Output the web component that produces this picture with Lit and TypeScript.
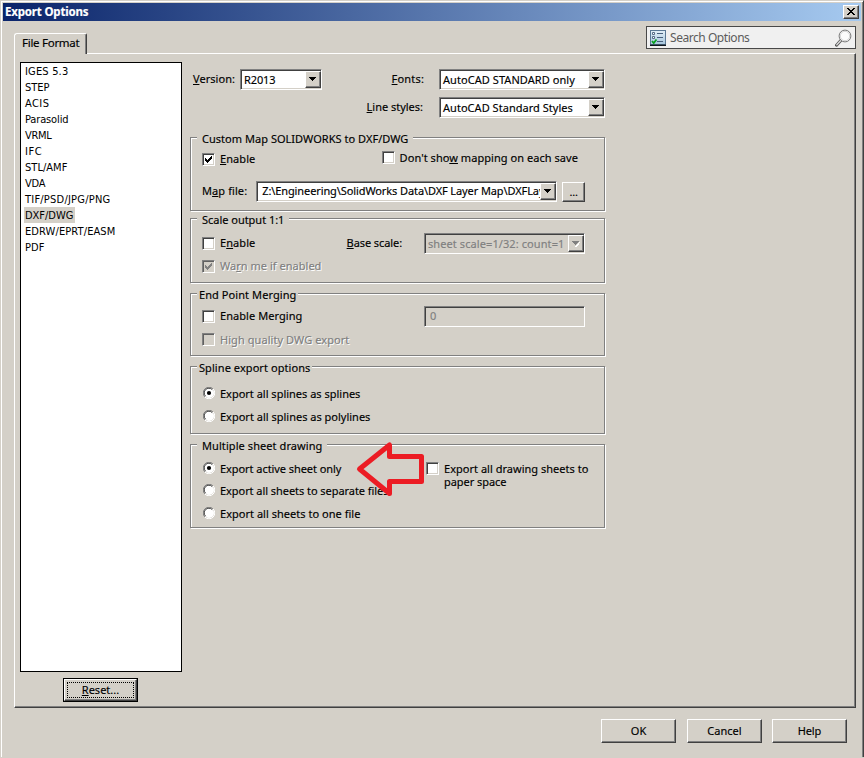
import { LitElement, html, css, svg, nothing } from "lit";
import { customElement } from "lit/decorators.js";

const FORMATS: [string, number][] = [
  ["IGES 5.3", 43], ["STEP", 24], ["ACIS", 24], ["Parasolid", 43], ["VRML", 26], ["IFC", 17],
  ["STL/AMF", 42], ["VDA", 20], ["TIF/PSD/JPG/PNG", 85], ["DXF/DWG", 48], ["EDRW/EPRT/EASM", 90], ["PDF", 19],
];

/** A caption; "&" marks the access key, data-w is the width it should take. */
const t = (text: string, w: number, cls = "") => {
  const i = text.indexOf("&");
  const body = i < 0 ? html`${text}` : html`${text.slice(0, i)}<u>${text[i + 1]}</u>${text.slice(i + 2)}`;
  return html`<span class="t ${cls}" data-w=${w}>${body}</span>`;
};

const check = (on = false, off = false) => html`<span class="check ${off ? "off" : ""}">${on
  ? html`<svg width="9" height="9" viewBox="0 0 9 9" shape-rendering="crispEdges"><path d="M1 3h1v1h1v1h1v-1h1v-1h1v-1h1v-1h1v3h-1v1h-1v1h-1v1h-1v1h-1v-1h-1v-1h-1z" fill=${off ? "#808080" : "#000"}/></svg>`
  : nothing}</span>`;

const radio = (on = false) => html`<svg class="radio" width="12" height="12" viewBox="0 0 12 12">
  <circle cx="6" cy="6" r="5" fill="#fff"/>
  <path d="M1.9 10.1A5.5 5.5 0 0 1 10.1 1.9" fill="none" stroke="#808080"/>
  <path d="M2.6 9.2A4.5 4.5 0 0 1 9.2 2.6" fill="none" stroke="#404040"/>
  <path d="M10.1 1.9A5.5 5.5 0 0 1 1.9 10.1" fill="none" stroke="#fff"/>
  ${on ? svg`<circle cx="6" cy="6" r="2.1" fill="#000"/>` : nothing}
</svg>`;

const combo = (text: string, w: number, cls: string, off = false) => html`<span class="combo ${cls} ${off ? "off" : ""}">
  <span class="val">${t(text, w)}</span>
  <span class="drop"><svg width="8" height="5" viewBox="0 0 8 5" shape-rendering="crispEdges">
    ${off ? svg`<path d="M8 1L5 5h-1l4-4z" fill="#fff" stroke="#fff"/>` : nothing}
    <path d="M0 0h7v1h-1v1h-1v1h-1v1h-1v-1h-1v-1h-1v-1h-1z" fill=${off ? "#808080" : "#000"}/></svg></span>
</span>`;

@customElement("app-root")
export class AppRoot extends LitElement {
  static styles = css`
    :host { display: block; width: 864px; height: 758px; overflow: hidden; background: #d4d0c8;
      font: 11px/16px "Noto Sans", "Open Sans", sans-serif; color: #000; }
    * { box-sizing: border-box; }
    .t { white-space: pre; display: block; flex: none; -webkit-text-stroke: 0.15px currentColor; }
    u { text-decoration: underline; text-underline-offset: 1px; text-decoration-thickness: 1px; text-decoration-skip-ink: none; }
    .win { position: relative; height: 757px; border-left: 1px solid #d4d0c8; border-top: 1px solid #d4d0c8;
      border-right: 1px solid #404040; box-shadow: inset 1px 1px #fff, inset -1px 0 #808080; padding: 2px 2px 0; }
    .title { height: 18px; display: flex; justify-content: space-between; align-items: center; color: #fff;
      background: linear-gradient(90deg, #0a246a, #a6caf0); padding: 0 2px 0 2px; font-weight: 700; font-size: 11.5px; }
    .bev { background: #d4d0c8; border: 1px solid; border-color: #fff #404040 #404040 #fff; box-shadow: inset -1px -1px #808080; }
    .close { width: 16px; height: 14px; display: grid; place-items: center; padding: 0 1px 1px 0; }
    .head { display: flex; justify-content: space-between; height: 32px; padding: 5px 5px 0 11px; }
    .tab { position: relative; z-index: 1; margin-top: 7px; width: 73px; height: 21px; border-left: 1px solid #fff; border-top: 1px solid #fff;
      border-right: 1px solid #404040; box-shadow: inset -1px 0 #808080; border-radius: 3px 2px 0 0; background: #d4d0c8; padding: 1px 0 0 7px; }
    .tab .t { font-size: 11.5px; }
    .search .t { font-size: 12px; }
    .search { width: 210px; height: 23px; border: 1px solid #484848; background: #f0f0f0; display: flex; align-items: center;
      padding: 0 3px; color: #5c5c5c; }
    .search .t { margin-left: 4px; flex: 1; -webkit-text-stroke: 0; }
    .page { margin-left: 11px; width: 842px; height: 655px; border: 1px solid; border-color: #fff #404040 #404040 #fff;
      box-shadow: inset -1px -1px #808080; display: flex; padding: 8px 0 0 5px; }
    .left { width: 162px; display: flex; flex-direction: column; }
    .list { height: 610px; border: 1px solid #000; background: #fff; padding: 0 3px; font-family: "DejaVu Sans Condensed", "DejaVu Sans", sans-serif; font-stretch: condensed; }
    .item { height: 16px; width: fit-content; padding: 1px 1px 0; }
    .item.sel { background: #d4d0c8; padding-right: 2px; }
    .item .t { -webkit-text-stroke: 0; }
    .reset { margin: 6px 0 0 43px; width: 75px; height: 24px; border: 1px solid #000; }
    .reset .bev { height: 22px; padding: 2px; }
    .focus { height: 16px; border: 1px dotted #000; display: flex; justify-content: center; align-items: center; }
    .main { margin-left: 8px; width: 415px; }
    .opt { display: flex; align-items: center; height: 21px; }
    .opt > .t, .tall > .t { margin-top: -2px; }
    .opt1 { margin-top: 7px; padding-left: 3px; }
    .opt2 { margin: 7px 0 19px; }
    .rt { margin-left: auto; }
    .combo { display: flex; flex: none; height: 21px; background: #fff; border: 1px solid; border-color: #808080 #fff #fff #808080;
      box-shadow: inset 1px 1px #404040, inset -1px -1px #d4d0c8; padding: 1px 0 1px 2px; align-items: stretch; }
    .combo .val { flex: 1; min-width: 0; overflow: hidden; padding: 1px 0 0 1px; }
    .drop { flex: none; width: 16px; display: grid; place-items: center; background: #d4d0c8; border: 1px solid;
      border-color: #fff #404040 #404040 #fff; box-shadow: inset -1px -1px #808080; }
    .drop svg { overflow: visible; }
    .off { color: #808080; }
    .combo.off, .check.off { background: #d4d0c8; }
    .c-version { width: 82px; margin-left: 5px; }
    .c-wide { width: 166px; }
    .c-map { width: 301px; margin-left: 9px; }
    .c-map .val { padding: 0 0 0 3px; }
    .c-scale { width: 161px; }
    .field { width: 161px; height: 21px; border: 1px solid; border-color: #808080 #fff #fff #808080;
      box-shadow: inset 1px 1px #404040; color: #808080; padding: 1px 0 0 5px; }
    .group { border: 1px solid #808080; box-shadow: inset 1px 1px #fff, 1px 1px #fff; width: 415px; }
    .g1 { height: 74px; margin-bottom: 7px; }
    .g2 { height: 65px; margin-bottom: 10px; }
    .g3 { height: 63px; margin-bottom: 10px; }
    .g4 { height: 68px; margin-bottom: 10px; }
    .g5 { height: 84px; }
    .legend { width: fit-content; height: 16px; margin: -7px 0 0 6px; padding: 0 5px 0 5px; background: #d4d0c8; }
    .legend.tight { padding: 0 2px 0 2px; }
    .row { display: flex; align-items: center; height: 16px; padding: 0 19px 0 11px; }
    .tall { height: 21px; }
    .m3 { margin-top: 3px; } .m4 { margin-top: 4px; } .m5 { margin-top: 5px; } .m6 { margin-top: 6px; }
    .m7 { margin-top: 7px; } .m10 { margin-top: 10px; } .m14 { margin-top: 14px; }
    .check { flex: none; width: 13px; height: 13px; margin-right: 5px; background: #fff; border: 1px solid;
      border-color: #808080 #fff #fff #808080; box-shadow: inset 1px 1px #404040, inset -1px -1px #d4d0c8; display: grid; place-items: center; }
    .check.off { box-shadow: inset 1px 1px #606060; }
    .raise .check { margin-bottom: 1px; }
    .etch { color: #808080; text-shadow: 1px 1px #fff; }
    .radio { flex: none; margin: 0 5px 2px 1px; }
    .show { display: flex; align-items: center; margin: -3px 7px 0 auto; }
    .dots { width: 23px; height: 20px; margin-left: 5px; display: grid; place-items: center; }
    .cols { display: flex; }
    .colL { width: 235px; }
    .colL .row { padding-right: 0; }
    .sheet { display: flex; margin-top: 8px; line-height: 13px; }
    .arrow { position: absolute; left: 354px; top: 438px; }
    .foot { display: flex; justify-content: flex-end; margin-top: 11px; padding-right: 14px; }
    .btn { width: 75px; height: 24px; display: grid; place-items: center; }
    .btn + .btn { margin-left: 11px; }
    .btn.help { margin-left: 10px; }
  `;

  /** Track each caption so that it fills the width it was given. */
  updated() {
    this.renderRoot.querySelectorAll<HTMLElement>(".t").forEach((el) => {
      const n = el.textContent!.length;
      const range = document.createRange();
      range.selectNodeContents(el);
      const spacing = (Number(el.dataset.w) + 0.4 - range.getBoundingClientRect().width) / n;
      el.style.letterSpacing = `${spacing.toFixed(3)}px`;
    });
  }

  render() {
    return html`<div class="win">
      <div class="title">${t("Export Options", 83)}
        <span class="bev close"><svg width="8" height="7" viewBox="0 0 8 7" shape-rendering="crispEdges"><path d="M0 0h2v1h1v1h2v-1h1v-1h2v1h-1v1h-1v1h-1v1h1v1h1v1h1v1h-2v-1h-1v-1h-2v1h-1v1h-2v-1h1v-1h1v-1h1v-1h-1v-1h-1v-1h-1z"/></svg></span>
      </div>
      <div class="head">
        <div class="tab">${t("File Format", 57)}</div>
        <div class="search">
          <svg width="16" height="16" viewBox="0 0 16 16">
            <defs><linearGradient id="sheet" x2="0" y2="1"><stop stop-color="#e4f0f8"/><stop offset="1" stop-color="#a4c4dc"/></linearGradient></defs>
            <rect x=".5" y=".5" width="15" height="14" fill="url(#sheet)" stroke="#5a7894"/>
            <path d="M0 15.3h16" stroke="#101820" stroke-width="1.4"/>
            <path d="M7 3.5h6M7 7.5h6M7 11.5h6" stroke="#48607c"/>
            <path d="M2.5 2.5h2v2h-2zM2.5 6.5h2v2h-2z" fill="#fff" stroke="#48607c" stroke-width=".9"/>
            <path d="M2 11l1.7 2L6.500 9.500" fill="none" stroke="#08a020" stroke-width="1.8"/>
          </svg>
          ${t("Search Options", 79)}
          <svg width="17" height="18" viewBox="0 0 17 18">
            <path d="M1.500 16.200L6.200 11" stroke="#555" stroke-width="3" stroke-linecap="round"/>
            <path d="M1.800 15.800L6.200 11" stroke="#ddd" stroke-width="1.300" stroke-linecap="round"/>
            <circle cx="10" cy="7" r="5.900" fill="#fcfcfc" stroke="#777"/>
            <circle cx="10" cy="7" r="4.700" fill="none" stroke="#d4d4d4"/>
          </svg>
        </div>
      </div>
      <div class="page">
        <div class="left">
          <div class="list">${FORMATS.map(([f, w]) => html`<div class="item ${f === "DXF/DWG" ? "sel" : ""}">${t(f, w)}</div>`)}</div>
          <div class="reset"><div class="bev"><div class="focus">${t("&Reset...", 37)}</div></div></div>
        </div>
        <div class="main">
          <div class="opt opt1">
            ${t("&Version:", 41.6)}${combo("R2013", 31, "c-version")}
            <span class="rt opt">${t("&Fonts:", 32)}<svg width="15" height="1"></svg>${combo("AutoCAD STANDARD only", 131.500, "c-wide")}</span>
          </div>
          <div class="opt opt2"><span class="rt opt">${t("&Line styles:", 56)}<svg width="16" height="1"></svg>${combo("AutoCAD Standard Styles", 129.500, "c-wide")}</span></div>

          <div class="group g1">
            <div class="legend">${t("Custom Map SOLIDWORKS to DXF/DWG", 206)}</div>
            <div class="row m4">${check(true)}${t("&Enable", 35)}<span class="show">${check()}${t("Don't sho&w mapping on each save", 178)}</span></div>
            <div class="row tall m14">${t("M&ap file:", 44.800)}${combo("Z:\\Engineering\\SolidWorks Data\\DXF Layer Map\\DXFLayerMap", 315, "c-map")}<span class="bev dots">${t("...", 8)}</span></div>
          </div>

          <div class="group g2">
            <div class="legend">${t("Scale output 1:1", 82)}</div>
            <div class="row tall m5">${check()}${t("E&nable", 35)}<span class="rt opt">${t("&Base scale:", 55)}<svg width="22" height="1"></svg>${combo("sheet scale=1/32: count=1", 136, "c-scale", true)}</span></div>
            <div class="row m4">${check(true, true)}${t("Wa&rn me if enabled", 101, "etch")}</div>
          </div>

          <div class="group g3">
            <div class="legend tight">${t("End Point Merging", 97)}</div>
            <div class="row tall m3 raise">${check()}${t("Enable Merging", 82)}<span class="rt field">${t("0", 6)}</span></div>
            <div class="row m5 raise">${check(false, true)}${t("High quality DWG export", 129, "etch")}</div>
          </div>

          <div class="group g4">
            <div class="legend tight">${t("Spline export options", 111)}</div>
            <div class="row m10">${radio(true)}${t("Export all splines as splines", 140)}</div>
            <div class="row m7">${radio()}${t("Export all splines as polylines", 150)}</div>
          </div>

          <div class="group g5">
            <div class="legend">${t("Multiple sheet drawing", 120)}</div>
            <div class="cols">
              <div class="colL">
                <div class="row m7">${radio(true)}${t("Export active sheet only", 121)}</div>
                <div class="row m6">${radio()}${t("Export all sheets to separate files", 168)}</div>
                <div class="row m7">${radio()}${t("Export all sheets to one file", 140)}</div>
              </div>
              <div class="sheet">${check()}<div>${t("Export all drawing sheets to", 144)}${t("paper space", 62)}</div></div>
            </div>
          </div>
        </div>
      </div>
      <div class="foot">
        <span class="bev btn">${t("OK", 15)}</span>
        <span class="bev btn">${t("Cancel", 34)}</span>
        <span class="bev btn help">${t("Help", 23)}</span>
      </div>
      <svg class="arrow" width="74" height="62" viewBox="355 439 74 62"><path d="M359.500 469L389.500 445V456.500H421.500V481.500H389.500V493.500Z" fill="#d4d0c8" stroke="#ec1c24" stroke-width="5" stroke-linejoin="round"/></svg>
    </div>`;
  }
}
